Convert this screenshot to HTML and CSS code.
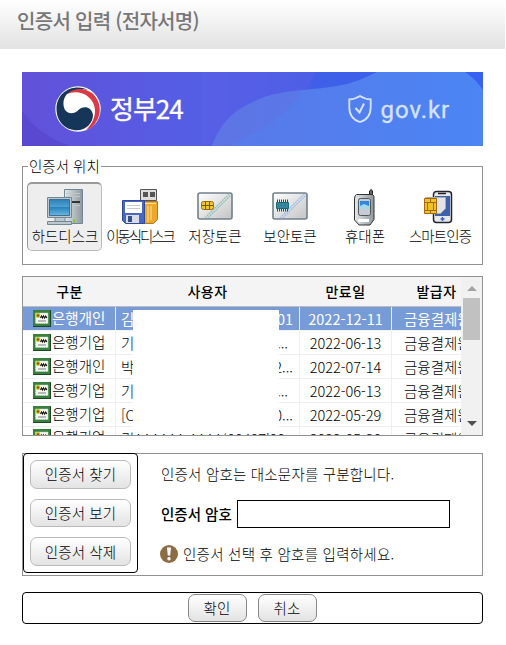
FILE: index.html
```html
<!DOCTYPE html>
<html lang="ko">
<head>
<meta charset="utf-8">
<title>인증서 입력 (전자서명)</title>
<link rel="stylesheet" href="styles.css">
</head>
<body>
<svg width="0" height="0" class="defs" aria-hidden="true">
  <defs>
    <linearGradient id="card" x1="0" y1="0" x2="1" y2="1"><stop offset="0" stop-color="#fff"/><stop offset="1" stop-color="#c3c3c5"/></linearGradient>
    <linearGradient id="screen" x1="0" y1="0" x2="0" y2="1"><stop offset="0" stop-color="#2d7fb6"/><stop offset=".45" stop-color="#51a0d0"/><stop offset=".5" stop-color="#2b83bc"/><stop offset="1" stop-color="#69b6df"/></linearGradient>
    <linearGradient id="metal" x1="0" y1="0" x2="1" y2="0"><stop offset="0" stop-color="#e4e8ea"/><stop offset="1" stop-color="#8d979d"/></linearGradient>
    <symbol id="cert" viewBox="0 0 18 17">
      <path fill="#1e4423" d="M0 0h18v17H0z"/><path fill="#3a803d" d="M0 0h17v16H0z"/>
      <path fill="#f4f7f2" stroke="#b9d8b9" stroke-dasharray="1 1" d="M2.500 3h12.500v10.500h-12.500z"/>
      <circle cx="5" cy="5.500" r="2.400" fill="#bfc51e"/><circle cx="5" cy="5.500" r="1.200" fill="#a05313"/>
      <path fill="none" stroke="#151515" stroke-width="1.100" d="M7.500 8l1-2 1 2 1-2 1.200 2 1-2 1.300 2"/>
      <path stroke="#999" stroke-width="1.300" d="M5 11h8"/>
    </symbol>
  </defs>
</svg>
<header class="title"><h1>인증서 입력 (전자서명)</h1></header>
<main>
  <section class="banner">
    <svg class="waves" width="461" height="74" viewBox="0 0 461 74" aria-hidden="true">
      <defs>
        <linearGradient id="bg" x1="0" y1="0" x2="1" y2="0"><stop offset="0" stop-color="#6251d9"/><stop offset=".42" stop-color="#5260e7"/><stop offset=".65" stop-color="#3f5fe8"/><stop offset="1" stop-color="#3762f0"/></linearGradient>
        <linearGradient id="hill" x1="0" y1="0" x2="1" y2="0"><stop offset="0" stop-color="#5a78e8"/><stop offset="1" stop-color="#4b85f4"/></linearGradient>
      </defs>
      <path fill="url(#bg)" d="M0 0h461v74H0z"/>
      <path fill="#5744cc" opacity=".65" d="M0 39C12 56 27 67 49 74H0z"/>
      <path fill="#5d5fe5" opacity=".45" d="M180 0h114C279 29 260 49 229 62l-49 12z"/>
      <path fill="url(#hill)" d="M190 74C199 50 211 39 231 30C256 17 287 19 315 14C333 11 342 6 355 0H443C451 5 456 11 461 18V74z"/>
      <path fill="#6571df" opacity=".35" d="M190 74C199 50 211 39 231 30C246 22 262 19 281 18C266 40 250 53 229 62L205 74z"/>
    </svg>
    <div class="brand">
      <svg width="46" height="46" viewBox="0 0 46 46" aria-hidden="true">
        <circle cx="23" cy="23" r="22.700" fill="#fff"/>
        <path fill="#da3a46" d="M9 9.500C16 1 28 1 37 7C46 15 47 27 41 36C38 41 35 43 31 44C38 37 42 28 39 19C35 8 22 2 9 9.500z"/>
        <path fill="#153659" d="M33 4C26 2 17 3 11.500 8.500C7 14 8 22 11 25C15 29 21 27 24 23.500C29 19 37 21 38 29C38 37 31 44.300 22 44.300C10 44.300 1.500 35 1.500 23C1.500 10 11 1.500 23 1.500C27 1.500 30 2.500 33 4z"/>
      </svg>
      <span>정부24</span>
    </div>
    <div class="gov">
      <svg width="24" height="28" viewBox="0 0 24 28" aria-hidden="true"><path fill="none" stroke="currentColor" stroke-width="1.800" d="M12 1Q7 4.300 1.300 4.300V12C1.300 20 5 25 12 27C19 25 22.700 20 22.700 12V4.300Q17 4.300 12 1z"/><path fill="none" stroke="currentColor" stroke-width="2" d="M7.500 13l4 4.500 4.500-9"/></svg>
      <span>gov.kr</span>
    </div>
  </section>

  <fieldset class="places">
    <legend>인증서 위치</legend>
    <div class="place selected">
      <svg width="36" height="38" viewBox="0 0 36 38"><path fill="url(#metal)" stroke="#718798" d="M17.500 1.500h18v34h-18z"/><path fill="none" stroke="#bdc6ca" d="M19 5.500h14M19 8.500h14M19 17.500h14"/><path fill="#333" d="M25 13h8v2h-8z"/><path fill="#8bc829" d="M26 31h2v4h-2z"/><path fill="#bdc8ce" stroke="#748894" d="M.5 9.500h24v20H.5zM8 29.500h10v4H8zM.5 33.500h24v3H.5z"/><path fill="url(#screen)" stroke="#3e718f" d="M2.500 11.500h20v16h-20z"/></svg>
      <span>하드디스크</span>
    </div>
    <div class="place narrow">
      <svg width="36" height="38" viewBox="0 0 36 38"><path fill="#ddd" stroke="#555" d="M18.500 1.500h16v11h-16z"/><path fill="#555" d="M21 4h5v5h-5zM28 4h5v5h-5z"/><path fill="#eca72c" stroke="#b27a28" d="M17.500 13.500h18v18l-4 4h-14z"/><path stroke="#ffe497" d="M20 15.500h14M26 18v16M29 18v14"/><path fill="#4967c2" stroke="#304a9b" d="M.5 12.500h22v23h-19l-3-3z"/><path fill="#fff" d="M3 14h17v11H3z"/><path stroke="#c7c9d9" d="M5 17.500h13M5 20.500h13"/><path fill="#d9dce4" d="M4 27h13v8H4z"/><path fill="#344e86" d="M6 28h4v6H6z"/></svg>
      <span>이동식디스크</span>
    </div>
    <div class="place">
      <svg width="36" height="38" viewBox="0 0 36 38"><rect x="1" y="5" width="34" height="26" rx="2" fill="url(#card)" stroke="#71808a" stroke-width="1.600"/><path stroke="#8fbeb7" stroke-width="1.200" stroke-dasharray="2 .7" d="M8 30L32 6M11 30L34 7"/><rect x="4.500" y="13.500" width="12" height="8" rx="2" fill="#ebc82d" stroke="#9e651b"/><path stroke="#80510f" d="M8.500 14v7M12.500 14v7M5 17.500h11"/></svg>
      <span>저장토큰</span>
    </div>
    <div class="place">
      <svg width="36" height="38" viewBox="0 0 36 38"><rect x="1" y="5" width="34" height="26" rx="2" fill="url(#card)" stroke="#71808a" stroke-width="1.600"/><path stroke="#9abde8" stroke-width="1.200" stroke-dasharray="2 .7" d="M8 30L32 6M11 30L34 7"/><path stroke="#444" stroke-width="12" stroke-dasharray="1 1" d="M5 17.500h12"/><path fill="#36859b" stroke="#176b7b" d="M4.500 14.500h12v6h-12z"/></svg>
      <span>보안토큰</span>
    </div>
    <div class="place">
      <svg width="36" height="38" viewBox="0 0 36 38"><path fill="#666" stroke="#222" d="M22.500 8V3q2-3 3 0v7z"/><path fill="url(#metal)" stroke="#333" d="M9.500 6.500h16q2 1 1.500 5v20l-4 5.500H12L7.500 32V11q0-4 2-4.500z"/><rect x="11.500" y="10.500" width="12" height="17" rx="2" fill="#c6cbd6" stroke="#555"/><path fill="#3187dc" d="M13 13h9v6h-9z"/><path fill="#a4d9e9" d="M13 18l4-2 5 2v3h-9z"/><path fill="#fff" d="M11 31h11v3H11z"/></svg>
      <span>휴대폰</span>
    </div>
    <div class="place smart">
      <svg width="36" height="38" viewBox="0 0 36 38"><rect x="11.500" y="3.500" width="18" height="31" rx="3" fill="#e7e8ec" stroke="#22252d" stroke-width="1.500"/><path fill="#3e61ac" d="M13 8h15v20H13z"/><path stroke="#222" stroke-width="1.500" d="M16 5.500h8"/><path fill="#e2e4e7" stroke="#a9adb1" d="M3.500 9.500h20v11l-5 5h-15z"/><path fill="#efc323" stroke="#a26a17" d="M2.500 10.500h12v15h-12z"/><path fill="none" stroke="#a26a17" d="M3 14.500h11M3 22.500h11M5.500 14v8M11.500 14v8M8.500 11v3M8.500 22v3"/><path stroke="#3a60b6" stroke-width="1.500" d="M18.500 31h4M20.500 29v4"/></svg>
      <span>스마트인증</span>
    </div>
  </fieldset>

  <section class="list">
    <div class="rows">
      <div class="row head"><span>구분</span><span>사용자</span><span>만료일</span><span>발급자</span></div>
      <div class="row on"><span class="kind"><svg><use href="#cert"/></svg>은행개인</span><span class="user"><b>김</b><i>01</i></span><span>2022-12-11</span><span class="issuer">금융결제원</span></div>
      <div class="row"><span class="kind"><svg><use href="#cert"/></svg>은행기업</span><span class="user"><b>기</b><i class="cut">...</i></span><span>2022-06-13</span><span class="issuer">금융결제원</span></div>
      <div class="row"><span class="kind"><svg><use href="#cert"/></svg>은행개인</span><span class="user"><b>박</b><i>2...</i></span><span>2022-07-14</span><span class="issuer">금융결제원</span></div>
      <div class="row"><span class="kind"><svg><use href="#cert"/></svg>은행기업</span><span class="user"><b>기</b><i class="cut">...</i></span><span>2022-06-13</span><span class="issuer">금융결제원</span></div>
      <div class="row"><span class="kind"><svg><use href="#cert"/></svg>은행기업</span><span class="user"><b>[C</b><i>0...</i></span><span>2022-05-29</span><span class="issuer">금융결제원</span></div>
      <div class="row last"><span class="kind"><svg><use href="#cert"/></svg>은행기업</span><span class="user"><b>김AAAAAA AAAA(00487'00</b></span><span>2022-05-30</span><span class="issuer">금융결제원</span></div>
      <div class="mask"></div>
    </div>
    <div class="scroll"><div class="arrow up"></div><div class="thumb"></div><div class="arrow down"></div></div>
  </section>

  <section class="panel">
    <div class="tools"><button>인증서 찾기</button><button>인증서 보기</button><button>인증서 삭제</button></div>
    <div class="form">
      <p>인증서 암호는 대소문자를 구분합니다.</p>
      <label><strong>인증서 암호</strong><input type="password"></label>
      <p class="notice"><svg width="18" height="18" viewBox="0 0 18 18"><circle cx="9" cy="9" r="9" fill="#8e6c43"/><path fill="#fff" d="M7 2.500h4l-.8 8H7.800z"/><circle cx="9" cy="13.700" r="1.700" fill="#fff"/></svg>인증서 선택 후 암호를 입력하세요.</p>
    </div>
  </section>

  <footer><button>확인</button><button>취소</button></footer>
</main>
</body>
</html>
```

FILE: styles.css
```css
* { box-sizing: border-box; }
body { margin: 0; background: #fff; color: #000; font: 14.5px/20px "Noto Sans CJK KR", sans-serif; font-weight: 300; overflow: hidden; }
.defs { position: absolute; }
.title { width: 505px; height: 49px; background: linear-gradient(#fff, #e2e2e2); padding: 6px 17px; }
h1 { margin: 0; font-size: 20px; line-height: 30px; font-weight: 500; letter-spacing: -.7px; color: #777; white-space: nowrap; }
main { width: 461px; margin: 23px 0 0 22px; }
.banner { position: relative; height: 74px; display: flex; justify-content: space-between; align-items: center; padding: 0 33px; color: #fff; }
.waves { position: absolute; inset: 0; }
.brand, .gov { position: relative; display: flex; align-items: center; }
.brand { gap: 9px; font-size: 26px; font-weight: 400; letter-spacing: -1px; line-height: 34px; -webkit-text-stroke: .3px #fff; }
.brand span { padding-bottom: 2px; }
.gov { gap: 9px; color: #d6e3ff; font: 400 24px/30px Roboto, sans-serif; letter-spacing: .9px; }
.gov span { padding-top: 2px; -webkit-text-stroke: .3px #d6e3ff; }

.places { position: relative; margin: 12px 0 0; height: 107px; min-width: 0; border: 1px solid #929292; padding: 7px 4px 5px; display: flex; }
.places legend { padding: 0 1px; margin-left: 1px; height: 17px; line-height: 16px; }
.place { flex: 0 0 75px; height: 69px; display: flex; flex-direction: column; align-items: center; padding-top: 6px; white-space: nowrap; }
.place span { line-height: 20px; margin-left: 1px; }
.place.selected { background: #eee; border: 1px solid #bbb; border-top: 2px solid #999; border-left-color: #999; border-radius: 5px; padding-top: 4px; }
.narrow span { letter-spacing: -2.1px; }
.smart span { letter-spacing: -.9px; }
.place svg { flex: none; }

.list { display: flex; margin-top: 11px; height: 160px; border: 1px solid #929292; overflow: hidden; }
.rows { position: relative; flex: 1; min-width: 0; overflow: hidden; }
.row { display: grid; grid-template-columns: 92px 184px 92px 90px; width: 458px; height: 24px; }
.row > span { border-left: 1px solid #eee; border-bottom: 1px solid #eee; text-align: center; line-height: 23px; white-space: nowrap; overflow: hidden; }
.row > span:first-child { border-left: 0; }
.row.head { height: 30px; background: #f4f4f4; border-bottom: 1px solid #bcbcbc; font-weight: 500; font-size: 14px; letter-spacing: .4px; }
.row.head > span { border: 0; line-height: 28px; padding-left: 1px; }
.row.on { color: #fff; font-weight: 400; }
.row.on > span { background: #779bd6; border-bottom-color: #f4f4f4; }
.row > .kind { display: flex; align-items: center; padding: 0 0 2px 10px; }
.kind svg { width: 18px; height: 17px; margin: 2px 1px 0 0; flex: none; }
.row > .user { display: flex; justify-content: space-between; padding: 0 6px 0 5px; }
.user b, .user i { font-style: normal; font-weight: inherit; }
.user .cut { margin-right: 5px; }
.row > .issuer { text-align: left; padding-left: 12px; }
.row.last > .kind { padding-bottom: 4px; }
.row.last > .user { line-height: 23px; }
.mask { position: absolute; left: 110px; top: 33px; width: 146px; height: 123px; background: #fff; }
.scroll { width: 21px; background: #f1f1f1; display: flex; flex-direction: column; align-items: center; padding: 9px 0; }
.thumb { width: 17px; height: 42px; background: #c1c1c1; margin-top: 7px; }
.arrow { border: 5px solid transparent; border-top: 0; border-bottom-color: #a3a3a3; }
.arrow.down { border: 5px solid transparent; border-bottom: 0; border-top-color: #505050; margin-top: auto; }

.panel { display: flex; height: 123px; margin-top: 17px; border: 1px solid #929292; }
.tools { width: 115px; height: 120px; margin-top: -1px; border: 1px solid #000; border-radius: 4px; padding: 6px; display: flex; flex-direction: column; gap: 10px; }
button { font: inherit; color: #000; height: 29px; border: 1px solid #bbb; border-radius: 7px; background: linear-gradient(#fff, #e3e3e3); padding: 0; letter-spacing: .15px; }
.form { padding: 9px 0 0 23px; white-space: nowrap; }
.form p { margin: 0; height: 22px; line-height: 22px; letter-spacing: .2px; }
.form label { display: flex; align-items: center; margin: 15px 0; }
.form strong { font-weight: 500; width: 76px; }
.form input { width: 213px; height: 28px; border: 1px solid #000; background: #fff; padding: 0; }
.form .notice { display: flex; align-items: center; gap: 5px; margin-left: -1px; letter-spacing: .25px; }

footer { display: flex; justify-content: center; gap: 11px; height: 32px; margin-top: 16px; border: 1px solid #000; border-radius: 4px; padding: 1px 1px 0 0; }
footer button { width: 59px; height: 28px; border-color: #888; }
```
